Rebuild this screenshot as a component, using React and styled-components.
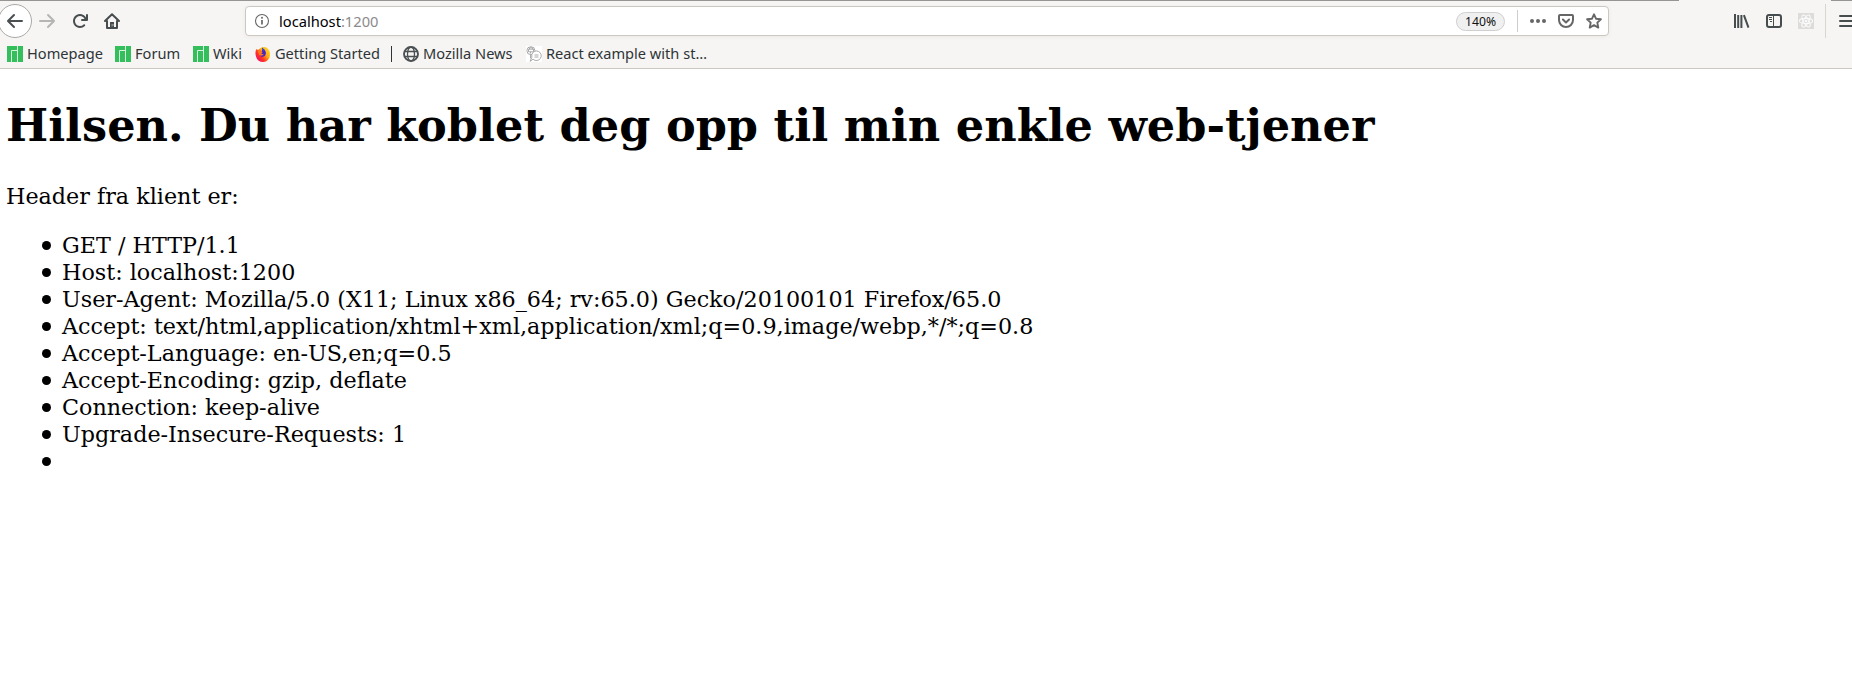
import React from "react";
import styled, { createGlobalStyle } from "styled-components";

const GlobalStyle = createGlobalStyle`
  * { box-sizing: border-box; }
  html, body { margin: 0; background: #fff; }
  body { overflow: hidden; }
`;

const Window = styled.div`
  height: 678px;
  overflow: hidden;
  background: #fff;
`;

const Chrome = styled.header`
  height: 69px;
  background: #f6f5f4;
  border-bottom: 1px solid #cdc7c2;
  font-family: "Noto Sans", sans-serif;
  color: #2e3436;
`;

const WindowEdge = styled.div`
  display: flex;
  justify-content: space-between;
  height: 1px;
`;

const Edge = styled.span`
  width: ${(p) => p.$width}px;
  background: #979593;
`;

const NavBar = styled.nav`
  display: flex;
  align-items: center;
  height: 40px;
`;

const BackButton = styled.button`
  display: flex;
  flex: none;
  align-items: center;
  justify-content: center;
  width: 34px;
  height: 34px;
  margin: 0 7px 0 -2px;
  padding: 0;
  border: 1px solid #aaa9a8;
  border-radius: 50%;
  background: #fff;
  color: #4a4f51;
`;

const ToolButton = styled.button`
  display: flex;
  flex: none;
  width: 16px;
  padding: 0;
  margin-right: ${(p) => p.$gap || 0}px;
  border: 0;
  background: none;
  color: ${(p) => p.$color || "#474d4f"};
`;

const Icon = styled.svg`
  display: block;
  flex: none;
  width: 16px;
  height: 16px;
  overflow: visible;
`;

const AddressBar = styled.div`
  display: flex;
  flex: none;
  align-items: center;
  width: 1364px;
  height: 30px;
  padding: 0 6px 0 8px;
  border: 1px solid #cdc7c2;
  border-radius: 4px;
  background: #fff;
  box-shadow: 0 1px 4px rgba(0, 0, 0, 0.05);
`;

const Address = styled.span`
  flex: 1;
  margin-left: 9px;
  font-size: 14.667px;
  line-height: 20px;
  color: #000;
`;

const Port = styled.span`
  color: #8b8b8b;
`;

const Zoom = styled.span`
  width: 49px;
  height: 19px;
  border: 1px solid #cfcfcf;
  border-radius: 10px;
  background: #f0f0f0;
  font-size: 12.2px;
  line-height: 17px;
  text-align: center;
  color: #111;
`;

const Divider = styled.span`
  flex: none;
  width: 1px;
  height: ${(p) => p.$height}px;
  margin: ${(p) => p.$margin};
  background: ${(p) => p.$color};
`;

const Tools = styled.div`
  display: flex;
  align-items: center;
  margin-left: 125px;
`;

const Bookmarks = styled.div`
  display: flex;
  align-items: center;
  height: 26px;
  padding-left: 7px;
`;

const Bookmark = styled.a`
  display: flex;
  flex: none;
  align-items: center;
  gap: 4px;
  width: ${(p) => p.$width}px;
  font-size: 14.6px;
  line-height: 20px;
  white-space: nowrap;
`;

const BookmarkLabel = styled.span`
  padding-bottom: 2px;
`;

const Page = styled.main`
  padding: 31px 6px 0;
  font-family: "DejaVu Serif", serif;
  font-size: 22.26px;
  line-height: 27px;
  color: #000;
`;

const Title = styled.h1`
  margin: 0 0 31px;
  font-size: 44.63px;
  line-height: 52px;
  white-space: nowrap;
`;

const Intro = styled.p`
  margin: 0 0 22px;
`;

const HeaderList = styled.ul`
  margin: 0;
  padding-left: 36px;
  list-style: none;
`;

const HeaderLine = styled.li`
  display: flex;
  align-items: center;
  height: 27px;

  &::before {
    content: "";
    width: 9px;
    height: 9px;
    margin-right: 11px;
    border-radius: 50%;
    background: #000;
  }
`;

const arrow =
  "M15 7H3.414l4.293-4.293a1 1 0 0 0-1.414-1.414l-6 6a1 1 0 0 0 0 1.414l6 6a1 1 0 0 0 1.414-1.414L3.414 9H15a1 1 0 0 0 0-2z";

const BackIcon = () => (
  <Icon viewBox="0 0 16 16" fill="currentColor"><path d={arrow} /></Icon>
);

const ForwardIcon = () => (
  <Icon viewBox="0 0 16 16" fill="currentColor"><path d={arrow} transform="translate(16 0) scale(-1 1)" /></Icon>
);

const ReloadIcon = () => (
  <Icon viewBox="0 0 16 16" fill="currentColor">
    <path d="M15 1a1 1 0 0 0-1 1v2.418A6.995 6.995 0 1 0 8 15a6.954 6.954 0 0 0 4.95-2.05 1 1 0 0 0-1.414-1.414A5.019 5.019 0 1 1 12.549 6H10a1 1 0 0 0 0 2h5a1 1 0 0 0 1-1V2a1 1 0 0 0-1-1z" />
  </Icon>
);

const HomeIcon = () => (
  <Icon viewBox="0 0 16 16" fill="none" stroke="currentColor" strokeWidth="2" strokeLinecap="round" strokeLinejoin="round">
    <path d="M1 8l7-6.800L15 8M3 8v7h10V8" />
    <path d="M6.900 14.500V10h2.200v4.500z" strokeWidth="1.800" strokeLinejoin="miter" />
    <path d="M9 12h.1" stroke="#f6f5f4" strokeWidth="1" />
  </Icon>
);

const InfoIcon = () => (
  <Icon viewBox="0 0 16 16" fill="none" stroke="#666">
    <circle cx="8" cy="8" r="6.500" strokeWidth="1.100" />
    <path d="M8 7v4.500" strokeWidth="1.700" />
    <circle cx="8" cy="4.800" r="1" fill="#666" stroke="none" />
  </Icon>
);

const DotsIcon = () => (
  <Icon viewBox="0 0 16 16" fill="currentColor">
    <circle cx="2" cy="8" r="2" /><circle cx="8" cy="8" r="2" /><circle cx="14" cy="8" r="2" />
  </Icon>
);

const PocketIcon = () => (
  <Icon viewBox="0 0 16 16" fill="none" stroke="currentColor" strokeWidth="2" strokeLinecap="round" strokeLinejoin="round">
    <path d="M2 2h12a1 1 0 0 1 1 1v4a7 7 0 0 1-14 0V3a1 1 0 0 1 1-1z" />
    <path d="M4.900 6.500L8 9.500l3.100-3" />
  </Icon>
);

const StarIcon = () => (
  <Icon viewBox="0 0 16 16" fill="none" stroke="currentColor" strokeWidth="1.900" strokeLinejoin="round">
    <path d="M8 1.300l2 4.400 4.900.5-3.600 3.400 1 5L8 12.100l-4.300 2.500 1-5L1.100 6.200 6 5.700z" />
  </Icon>
);

const LibraryIcon = () => (
  <Icon viewBox="0 0 16 16" fill="none" stroke="currentColor" strokeWidth="2" strokeLinecap="butt">
    <path d="M1 1v14M4.200 2v13M7.400 2v13M9.900 2.200l4.600 12.500" />
  </Icon>
);

const SidebarIcon = () => (
  <Icon viewBox="0 0 16 16" fill="none" stroke="currentColor">
    <rect x="1" y="2" width="14" height="12" rx="2" strokeWidth="2" />
    <path d="M7.500 2v12" strokeWidth="1" />
    <path d="M3 4.500h3M3 6.500h3M4 8.500h2" />
  </Icon>
);

const ReactToolIcon = () => (
  <Icon viewBox="0 0 16 16" fill="none" stroke="#fafafa" strokeWidth="1.100">
    <rect width="16" height="16" fill="#dddcdb" stroke="none" />
    <ellipse cx="8" cy="8" rx="6.600" ry="2.600" />
    <ellipse cx="8" cy="8" rx="6.600" ry="2.600" transform="rotate(60 8 8)" />
    <ellipse cx="8" cy="8" rx="6.600" ry="2.600" transform="rotate(120 8 8)" />
    <circle cx="8" cy="8" r="1.300" fill="#fafafa" stroke="none" />
  </Icon>
);

const MenuIcon = () => (
  <Icon viewBox="0 0 16 16" fill="none" stroke="currentColor" strokeWidth="2" strokeLinecap="round">
    <path d="M2 3h12M2 8h12M2 13h12" />
  </Icon>
);

const ManjaroIcon = () => (
  <Icon viewBox="0 0 16 16">
    <path d="M0 0h16v16H0z" fill="#35bf5c" />
    <path d="M10.500 0v16M4.500 16V4.500h6" fill="none" stroke="#d9f2e0" strokeWidth="1" />
  </Icon>
);

const FirefoxIcon = () => (
  <Icon viewBox="0 0 16 16">
    <defs>
      <linearGradient id="flame" x1="1" y1="0" x2="0.1" y2="0.8">
        <stop offset="0" stopColor="#ffe226" />
        <stop offset=".45" stopColor="#ffb016" />
        <stop offset=".75" stopColor="#ff3325" />
        <stop offset="1" stopColor="#f5105d" />
      </linearGradient>
    </defs>
    <path d="M1.500 3L3 4Q7.500-.5 11.500 1.500q4 3 3.500 8a7.100 7.100 0 0 1-14 1Q-.3 6 1.500 3z" fill="url(#flame)" />
    <path d="M7 1.500Q10 3 10.800 6q.5 4.300-3 4.700-3 0-3.800-2.800L4.500 5l2.500.5z" fill="#4924c8" />
    <path d="M3 5l2.800-.5L7.700 6.300 6.300 7.700 9 8.500Q6.500 10.500 4 9z" fill="#ff7a18" />
    <path d="M7 1.500L7.500 4l2 1z" fill="#0b76e8" />
  </Icon>
);

const GlobeIcon = () => (
  <Icon viewBox="0 0 16 16" fill="none" stroke="#4b5052" strokeWidth="1.300">
    <circle cx="8" cy="8" r="7" strokeWidth="1.900" />
    <ellipse cx="8" cy="8" rx="3.500" ry="7" />
    <path d="M1.500 5.500h13M1.500 10.500h13" />
  </Icon>
);

const ChatIcon = () => (
  <Icon viewBox="0 0 16 16" fill="none" stroke="#a0a0a0" strokeWidth="0.900">
    <path d="M0 0h16v16H0z" fill="#fff" stroke="none" />
    <circle cx="4.900" cy="4.700" r="4" />
    <path d="M2.500 3.200h5v2.600h-5zM3.500 3.200V1.800h3v1.400M4.500 5.800v1.700M4.500 8.700V12l1.500 1" />
    <path d="M5.800 8.500a4.800 4.800 0 1 1 1.300 4.700L4 15.300l1.800-3.800z" fill="#fff" />
    <path d="M8.500 9h4M8.500 11h4" />
  </Icon>
);

const bookmarks = [
  { label: "Homepage", width: 108, Glyph: ManjaroIcon },
  { label: "Forum", width: 78, Glyph: ManjaroIcon },
  { label: "Wiki", width: 62, Glyph: ManjaroIcon },
  { label: "Getting Started", width: 136, Glyph: FirefoxIcon },
  { divider: true },
  { label: "Mozilla News", width: 123, Glyph: GlobeIcon },
  { label: "React example with st…", width: 190, Glyph: ChatIcon },
];

const requestHeaders = [
  "GET / HTTP/1.1",
  "Host: localhost:1200",
  "User-Agent: Mozilla/5.0 (X11; Linux x86_64; rv:65.0) Gecko/20100101 Firefox/65.0",
  "Accept: text/html,application/xhtml+xml,application/xml;q=0.9,image/webp,*/*;q=0.8",
  "Accept-Language: en-US,en;q=0.5",
  "Accept-Encoding: gzip, deflate",
  "Connection: keep-alive",
  "Upgrade-Insecure-Requests: 1",
  "",
];

export default function App() {
  return (
    <Window>
      <GlobalStyle />
      <Chrome>
        <WindowEdge><Edge $width={1679} /><Edge $width={21} /></WindowEdge>
        <NavBar>
          <BackButton aria-label="Back"><BackIcon /></BackButton>
          <ToolButton aria-label="Forward" $gap={17} $color="#b5b5b4"><ForwardIcon /></ToolButton>
          <ToolButton aria-label="Reload" $gap={16}><ReloadIcon /></ToolButton>
          <ToolButton aria-label="Home" $gap={125}><HomeIcon /></ToolButton>
          <AddressBar>
            <InfoIcon />
            <Address>localhost<Port>:1200</Port></Address>
            <Zoom>140%</Zoom>
            <Divider $height={22} $margin="0 12px" $color="#cfcdcb" />
            <ToolButton aria-label="Page actions" $gap={12} $color="#666"><DotsIcon /></ToolButton>
            <ToolButton aria-label="Pocket" $gap={12} $color="#666"><PocketIcon /></ToolButton>
            <ToolButton aria-label="Bookmark" $color="#666"><StarIcon /></ToolButton>
          </AddressBar>
          <Tools>
            <ToolButton aria-label="Library" $gap={16}><LibraryIcon /></ToolButton>
            <ToolButton aria-label="Sidebars" $gap={16}><SidebarIcon /></ToolButton>
            <ToolButton aria-label="React tools" $gap={11}><ReactToolIcon /></ToolButton>
            <Divider $height={34} $margin="0 12px 0 0" $color="#d8d5d2" />
            <ToolButton aria-label="Menu"><MenuIcon /></ToolButton>
          </Tools>
        </NavBar>
        <Bookmarks>
          {bookmarks.map(({ label, width, Glyph, divider }) =>
            divider ? (
              <Divider key="divider" $height={16} $margin="0 11px 0 0" $color="#2e3436" />
            ) : (
              <Bookmark key={label} $width={width}><Glyph /><BookmarkLabel>{label}</BookmarkLabel></Bookmark>
            )
          )}
        </Bookmarks>
      </Chrome>
      <Page>
        <Title>Hilsen. Du har koblet deg opp til min enkle web-tjener</Title>
        <Intro>Header fra klient er:</Intro>
        <HeaderList>
          {requestHeaders.map((line, i) => <HeaderLine key={i}>{line}</HeaderLine>)}
        </HeaderList>
      </Page>
    </Window>
  );
}
